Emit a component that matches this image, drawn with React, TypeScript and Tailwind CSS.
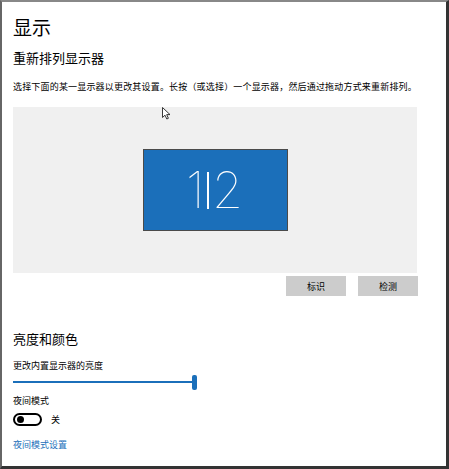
import React from "react";

const cjk = { fontFamily: '"Noto Sans CJK SC", "Noto Sans", sans-serif' };

export default function App() {
  return (
    <div
      className="w-[449px] h-[469px] bg-white border-l-2 border-t-2 border-r-[3px] border-b-[3px] border-l-[#666] border-t-[#888] border-r-[#333] border-b-[#333] box-border overflow-hidden"
      style={cjk}
    >
      <div className="flex flex-col pl-[11px] pt-[13px] w-[416px] text-black">
        <div className="text-[19px] leading-[24px]">显示</div>
        <div className="mt-[11px] text-[13px] leading-[16px]">重新排列显示器</div>
        <div className="mt-[15px] text-[9px] leading-[12px] whitespace-nowrap tracking-[0.18px]">
          选择下面的某一显示器以更改其设置。长按（或选择）一个显示器，然后通过拖动方式来重新排列。
        </div>
        <div className="relative mt-[14px] w-[404px] h-[166px] bg-[#f0f0f0] flex items-center justify-center">
          <div className="w-[145px] h-[82px] bg-[#1b6fba] border border-[#4a4a4a] flex items-center justify-center pr-[1px]">
            <div
              className="flex items-center gap-[3px] text-white text-[50px] leading-none font-thin"
              style={{ fontFamily: 'Inter, "Open Sans", sans-serif' }}
            >
              <span>1</span>
              <div className="w-[1.5px] h-[37px] bg-white" />
              <span>2</span>
            </div>
          </div>
          <svg
            className="absolute left-[149px] top-0"
            width="10"
            height="13"
            viewBox="0 0 10 13"
          >
            <path
              d="M0.5 0.5 L0.5 10.5 L3 8.2 L4.8 12 L6.4 11.3 L4.7 7.6 L8 7.6 Z"
              fill="white"
              stroke="#222"
              strokeWidth="0.9"
              strokeLinejoin="round"
            />
          </svg>
        </div>
        <div className="mt-[3px] flex justify-end gap-[12px] w-[405px]">
          <div className="w-[60px] h-[20px] bg-[#cccccc] flex items-center justify-center text-[9px] leading-none">
            标识
          </div>
          <div className="w-[60px] h-[20px] bg-[#cccccc] flex items-center justify-center text-[9px] leading-none">
            检测
          </div>
        </div>
        <div className="mt-[35px] text-[13px] leading-[16px]">亮度和颜色</div>
        <div className="mt-[13px] text-[9px] leading-[12px]">更改内置显示器的亮度</div>
        <div className="mt-[2px] h-[16px] w-[185px] flex items-center">
          <div className="h-[2px] w-[179px] bg-[#1b6fba]" />
          <div className="w-[5px] h-[15px] rounded-[2px] bg-[#1b6fba]" />
        </div>
        <div className="mt-[5px] text-[9px] leading-[12px]">夜间模式</div>
        <div className="mt-[6px] flex items-center gap-[9px]">
          <div className="w-[29px] h-[13px] rounded-full border-2 border-black flex items-center pl-[2px] box-border">
            <div className="w-[7px] h-[7px] rounded-full bg-black" />
          </div>
          <span className="text-[9px] leading-[12px]">关</span>
        </div>
        <div className="mt-[13px] text-[9px] leading-[12px] text-[#1b6fba]">夜间模式设置</div>
      </div>
    </div>
  );
}
